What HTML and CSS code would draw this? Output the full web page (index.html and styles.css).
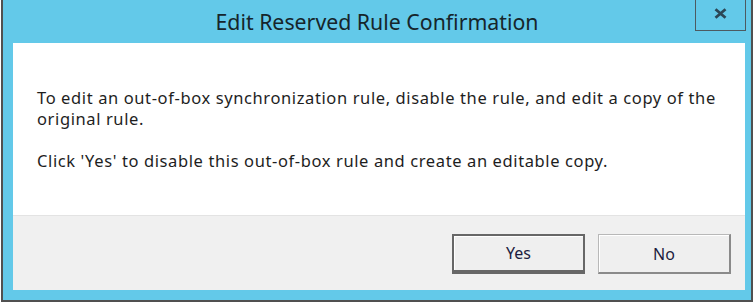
FILE: index.html
```html
<!DOCTYPE html>
<html lang="en">
<head>
    <meta charset="UTF-8">
    <title>Edit Reserved Rule Confirmation</title>
    <link rel="stylesheet" href="styles.css">
</head>
<body>
    <div class="dialog">
        <div class="titlebar">
            <span class="title">Edit Reserved Rule Confirmation</span>
            <button class="close" title="Close">
                <svg width="13" height="11" viewBox="0 0 13 11">
                    <path d="M1.5 1.2 L11.5 9.8 M11.5 1.2 L1.5 9.8" stroke="#2b4756" stroke-width="2.8" fill="none"/>
                </svg>
            </button>
        </div>
        <div class="content">
            <div class="message">
                <p>To edit an out-of-box synchronization rule, disable the rule, and edit a copy of the original rule.</p>
                <p>Click 'Yes' to disable this out-of-box rule and create an editable copy.</p>
            </div>
            <div class="footer">
                <button class="btn default">Yes</button>
                <button class="btn">No</button>
            </div>
        </div>
    </div>
</body>
</html>
```

FILE: styles.css
```css
body {
    margin: 0;
    background: #ffffff;
    font-family: "Noto Sans", "Open Sans", sans-serif;
}
.dialog {
    margin-left: 1px;
    width: 732px;
    height: 290px;
    padding: 0 6px 10px 10px;
    background: #63c9e9;
    border: 2px solid #505050;
    border-top: none;
    display: flex;
    flex-direction: column;
}
.titlebar {
    height: 43px;
    margin: 0 -6px 0 -10px;
    display: grid;
    grid-template-columns: 1fr auto 1fr;
    align-items: start;
}
.title {
    grid-column: 2;
    font-size: 21.3px;
    line-height: 30px;
    padding-top: 7px;
    color: #16252b;
}
.close {
    grid-column: 3;
    justify-self: end;
    margin-right: 5px;
    width: 51px;
    height: 31px;
    background: transparent;
    border: 1px solid #4d5a60;
    border-top: none;
    padding: 0 0 4px;
    display: flex;
    align-items: center;
    justify-content: center;
}
.content {
    flex: 1;
    background: #ffffff;
    display: flex;
    flex-direction: column;
}
.message {
    flex: 1;
    padding: 44px 24px 0 24px;
    font-size: 16.5px;
    letter-spacing: 0.61px;
    line-height: 21px;
    color: #1e1e1e;
}
.message p {
    margin: 0 0 21px;
}
.footer {
    height: 75px;
    background: #f0f0f0;
    border-top: 1px solid #e3e3e3;
    display: flex;
    justify-content: flex-end;
    align-items: flex-start;
    gap: 13px;
    padding: 18px 14px 0 0;
    box-sizing: border-box;
}
.btn {
    width: 133px;
    height: 40px;
    font-family: inherit;
    font-size: 16px;
    color: #1c1c40;
    background: #efefef;
    border: 1px solid #b8b8b8;
    border-right: 2px solid #8a8a8a;
    border-bottom: 2px solid #8a8a8a;
    box-shadow: inset 1px 1px 0 #ffffff;
}
.btn.default {
    border: 2px solid #676767;
    border-bottom-width: 4px;
}
```
